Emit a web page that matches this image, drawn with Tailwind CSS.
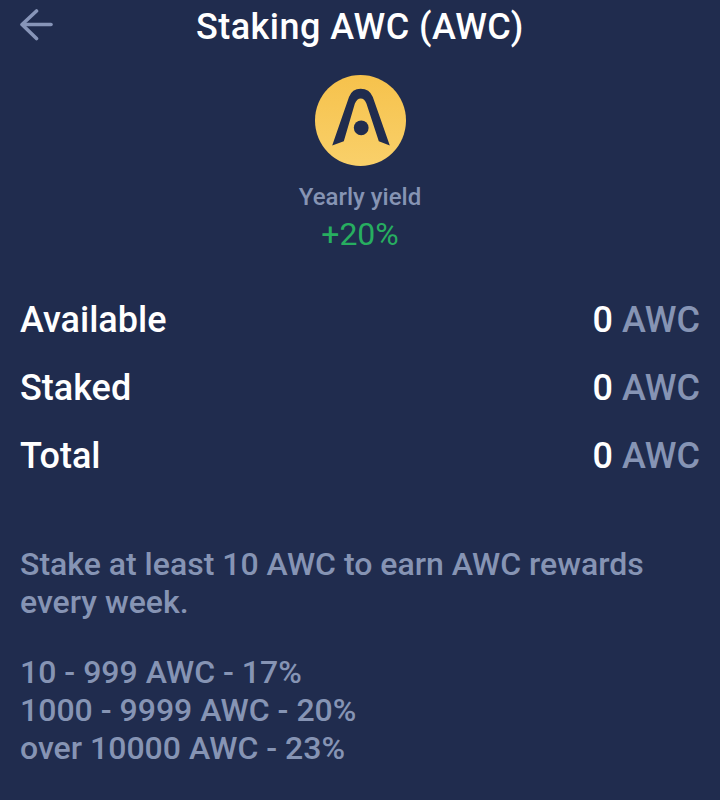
<!DOCTYPE html>
<html>
<head>
<script src="https://cdn.jsdelivr.net/npm/@tailwindcss/browser@4"></script>
</head>
<body class="bg-[#202c4e] font-[Roboto,sans-serif]">
<main class="w-[720px] h-[800px] overflow-hidden bg-[#202c4e] px-5 flex flex-col">
  <header class="relative h-[54px] flex items-center justify-center">
    <svg class="absolute left-0 top-[9px]" width="34" height="32" viewBox="0 0 34 32" fill="none" stroke="#8795b8" stroke-width="3.6" stroke-linecap="round" stroke-linejoin="round"><path d="M31 15.500H3"/><path d="M16.500 2 2 15.500 16.500 29.500"/></svg>
    <h1 class="text-[36px] leading-[54px] font-medium text-white tracking-[0.45px]">Staking AWC (AWC)</h1>
  </header>
  <div class="flex flex-col items-center">
    <svg class="mt-[21px]" width="91" height="91" viewBox="0 0 91 91">
      <defs><linearGradient id="g" x1="0" y1="0" x2="0" y2="1"><stop offset="0" stop-color="#f6c24c"/><stop offset="1" stop-color="#f9d06a"/></linearGradient></defs>
      <circle cx="45.500" cy="45.500" r="45.500" fill="url(#g)"/>
      <path d="M17.200 70.500 34 22Q37 13.800 45.700 13.800 54.500 13.800 57.800 22L74.800 70.500 63.800 66.200 51.500 28.800Q49.500 23.500 45.700 23.500 42 23.500 39.800 28.800L28.800 66.200Z" fill="#202c4e"/>
      <circle cx="46.200" cy="52.800" r="7.400" fill="#202c4e"/>
    </svg>
    <p class="mt-[15px] text-[24px] leading-[32px] text-[#8694b4] font-medium">Yearly yield</p>
    <p class="mt-[3px] text-[32px] leading-[36px] text-[#27ae60]">+20%</p>
  </div>
  <dl class="mt-[47px] flex flex-col gap-[26px] text-[36px] leading-[42px] font-medium">
    <div class="flex justify-between"><dt class="text-white">Available</dt><dd class="text-white">0 <span class="text-[#8694b4]">AWC</span></dd></div>
    <div class="flex justify-between"><dt class="text-white">Staked</dt><dd class="text-white">0 <span class="text-[#8694b4]">AWC</span></dd></div>
    <div class="flex justify-between"><dt class="text-white">Total</dt><dd class="text-white">0 <span class="text-[#8694b4]">AWC</span></dd></div>
  </dl>
  <p class="mt-[68px] text-[32px] leading-[38px] text-[#8694b4] font-medium">Stake at least 10 AWC to earn AWC rewards every week.</p>
  <p class="mt-[32px] text-[32px] leading-[38px] text-[#8694b4] font-medium">10 - 999 AWC - 17%<br>1000 - 9999 AWC - 20%<br>over 10000 AWC - 23%</p>
</main>
</body>
</html>
